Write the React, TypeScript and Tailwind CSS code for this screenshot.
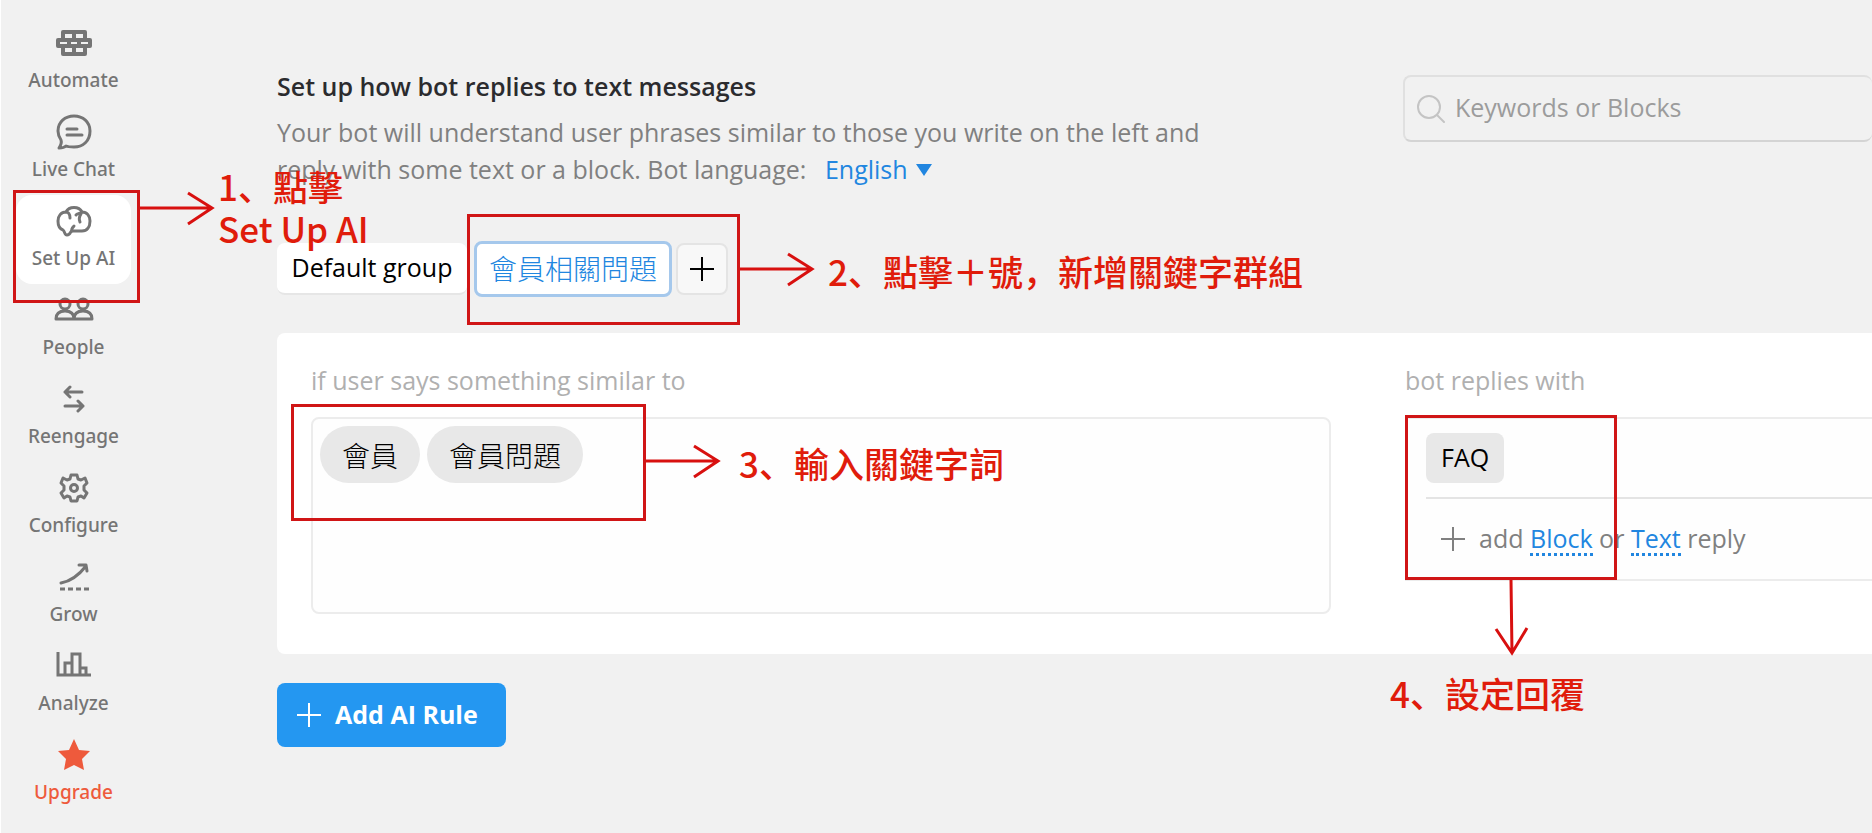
import * as React from "react";

const stroke = {
  fill: "none",
  stroke: "currentColor",
  strokeWidth: 3,
  strokeLinecap: "round",
  strokeLinejoin: "round",
} as const;

function AutomateIcon() {
  return (
    <svg width="36" height="26" viewBox="0 0 36 26" {...stroke} strokeWidth={4}>
      <path d="M7 2h22v8H7zM2 10h32v6H2zM7 16h22v8H7zM18 2v8M13 10v6M23 10v6M18 16v8" />
    </svg>
  );
}

function LiveChatIcon() {
  return (
    <svg width="36" height="36" viewBox="0 0 36 36" {...stroke}>
      <path d="M5 26C3 23 2 21 2 17C2 8 9 2 18 2C27 2 34 8 34 17C34 27 27 33 18 33C15 33 12 33 10 32C8 34 5 34 3 34C5 31 6 29 5 26Z" />
      <path d="M11 15h10M11 21h15" />
    </svg>
  );
}

function BrainIcon() {
  return (
    <svg width="36" height="31" viewBox="0 0 36 31" {...stroke}>
      <path d="M10 6C13 0 23 0 26 6C31 6 34 10 34 15C34 21 31 25 26 25H16C14 25 15 29 11 29C8 29 9 25 7 24C4 23 2 20 2 15C2 10 5 6 10 6" />
      <path d="M10 6C12 6 14 8 14 12M26 6C25 8 21 7 20 9M25 8C23 11 23 14 24 16M16 25C15 23 17 21 18 20" />
    </svg>
  );
}

function PeopleIcon() {
  return (
    <svg width="40" height="26" viewBox="0 0 40 26" {...stroke}>
      <circle cx="11" cy="7" r="5" />
      <circle cx="29" cy="7" r="5" />
      <path d="M2 22C2 16 6 14 11 14C16 14 20 16 20 22C20 16 24 14 29 14C34 14 38 16 38 22Z" />
    </svg>
  );
}

function ReengageIcon() {
  return (
    <svg width="22" height="28" viewBox="0 0 22 28" {...stroke}>
      <path d="M19 7H2M7 2L2 7L7 12M2 21H20M15 16L20 21L15 26" />
    </svg>
  );
}

function ConfigureIcon() {
  return (
    <svg width="30" height="30" viewBox="0 0 30 30" {...stroke}>
      <path d="M12 2H18L19 6L22 7L26 5L28 10L25 13V17L28 20L25 25L22 23L19 24L18 28H12L11 24L8 23L5 25L2 20L5 17V13L2 10L4 5L8 7L11 6Z" />
      <circle cx="15" cy="15" r="3.5" />
    </svg>
  );
}

function GrowIcon() {
  return (
    <svg width="30" height="30" viewBox="0 0 30 30" {...stroke}>
      <path d="M2 21C13 19 20 13 27 4M20 3L27 3L28 9" />
      <path d="M1 27H30" strokeDasharray="5 3" strokeLinecap="butt" />
    </svg>
  );
}

function AnalyzeIcon() {
  return (
    <svg width="36" height="28" viewBox="0 0 36 28" {...stroke} strokeLinecap="butt" strokeLinejoin="miter">
      <path d="M2 0V23H35M9 23V11H16M16 23V2H24V23M24 16H30V23" />
    </svg>
  );
}

function StarIcon() {
  return (
    <svg width="34" height="32" viewBox="0 0 34 32" fill="currentColor">
      <path d="M17 0L22 11L33 12L25 20L27 31L17 26L7 31L9 20L1 12L12 11Z" />
    </svg>
  );
}

function PlusIcon({ className = "" }: { className?: string }) {
  return (
    <svg width="24" height="24" viewBox="0 0 24 24" className={className} fill="none" stroke="currentColor" strokeWidth="2">
      <path d="M12 0v24M0 12h24" />
    </svg>
  );
}

const navItems = [
  { label: "Automate", icon: <AutomateIcon /> },
  { label: "Live Chat", icon: <LiveChatIcon /> },
  { label: "Set Up AI", icon: <BrainIcon />, active: true },
  { label: "People", icon: <PeopleIcon /> },
  { label: "Reengage", icon: <ReengageIcon /> },
  { label: "Configure", icon: <ConfigureIcon /> },
  { label: "Grow", icon: <GrowIcon /> },
  { label: "Analyze", icon: <AnalyzeIcon /> },
  { label: "Upgrade", icon: <StarIcon />, highlight: true },
];

// Red arrow that leaves the right side of a step box
function ArrowRight({ className }: { className: string }) {
  return (
    <svg width="76" height="36" viewBox="0 0 76 36" className={className} fill="none" stroke="#d8100f" strokeWidth="3">
      <path d="M0 18H72M48 3L72 18L48 34" />
    </svg>
  );
}

const stepBox = "pointer-events-none absolute z-10 border-3 border-[#d01516]";
const stepText =
  "pointer-events-none absolute z-10 whitespace-nowrap text-[35px] leading-[42px] font-medium text-[#e01c0b] font-['Noto_Sans_CJK_SC',sans-serif]";

function Sidebar() {
  return (
    <nav className="w-[147px] shrink-0 border-l border-white pt-[17px]">
      <ul>
        {navItems.map((item) => (
          <li key={item.label} className="relative pr-[16px] pl-[15px]">
            <a
              href="#"
              className={`flex h-[89px] flex-col items-center rounded-2xl pt-1 font-['Noto_Sans',sans-serif] text-[19px] leading-[30px] font-medium ${
                item.active ? "bg-white" : ""
              } ${item.highlight ? "text-[#ee5a3c]" : "text-[#757575]"}`}
            >
              <span className="flex h-11 items-center">{item.icon}</span>
              {item.label}
            </a>
            {item.active && (
              <div className={`${stepBox} -top-[5px] left-[12px] h-[113px] w-[127px]`}>
                <ArrowRight className="absolute left-[124px] -top-[3px]" />
                <p className={`${stepText} left-[202px] -top-[28px]`}>
                  1、點擊
                  <br />
                  Set Up AI
                </p>
              </div>
            )}
          </li>
        ))}
      </ul>
    </nav>
  );
}

function PageHeader() {
  return (
    <header className="grid grid-cols-[1052fr_469fr] gap-[74px]">
      <div>
        <h1 className="text-[25px] leading-9 font-semibold text-[#2b2b2e]">
          Set up how bot replies to text messages
        </h1>
        <div className="mt-2.5 max-w-[960px] text-[25px] leading-[37px] text-[#808080]">
          Your bot will understand user phrases similar to those you write on the left and reply with some text or a
          block. <label htmlFor="language">Bot language: </label>
          <span className="ml-3 inline-flex items-center gap-2 text-[#2186e0]">
            <select id="language" className="cursor-pointer appearance-none bg-transparent">
              <option>English</option>
            </select>
            <svg width="16" height="12" viewBox="0 0 16 12" fill="currentColor">
              <path d="M0 0H16L8 12Z" />
            </svg>
          </span>
        </div>
      </div>
      <label className="mt-[7px] flex h-[67px] items-center gap-2.5 rounded-lg border-2 border-r-0 border-[#e0e0e0] border-b-[#d4d4d4] pl-3">
        <svg width="28" height="28" viewBox="0 0 28 28" className="shrink-0 text-[#c4c4c4]" {...stroke} strokeWidth={2}>
          <circle cx="12" cy="12" r="11" />
          <path d="M20 20l7 7" />
        </svg>
        <input
          type="search"
          aria-label="Search"
          placeholder="Keywords or Blocks"
          className="w-full min-w-0 bg-transparent pb-1 text-[25px] leading-9 outline-none placeholder:text-[#9c9c9c]"
        />
      </label>
    </header>
  );
}

function GroupTabs() {
  return (
    <div className="mt-[53px] flex">
      <div className="flex items-center">
        <button className="h-[52px] w-[190px] rounded-lg border-b-2 border-[#e6e6e6] bg-white text-[25px] text-black">
          Default group
        </button>
      </div>
      <div className="relative ml-[7px] flex items-center gap-1">
        <button className="h-14 rounded-lg border-3 border-[#a5c8ec] bg-white px-3 text-[28px] font-light text-[#2186e0]">
          會員相關問題
        </button>
        <button
          aria-label="Add group"
          className="flex h-[52px] w-[52px] items-center justify-center rounded-lg border-2 border-[#e4e4e4] bg-[#f8f8f8] text-black"
        >
          <PlusIcon />
        </button>
        <div className={`${stepBox} -top-[27px] -left-[7px] h-[111px] w-[273px]`}>
          <ArrowRight className="absolute left-[270px] top-[34px]" />
          <p className={`${stepText} left-[358px] top-[33px]`}>2、點擊＋號，新增關鍵字群組</p>
        </div>
      </div>
    </div>
  );
}

function RuleCard() {
  const phrases = ["會員", "會員問題"];
  return (
    <section className="mt-9 grid grid-cols-[1020fr_467fr] gap-[74px] rounded-l-lg bg-white pt-[29px] pb-10 pl-[34px]">
      <div>
        <label htmlFor="phrase" className="block text-[25px] leading-9 text-[#b0b0b0]">
          if user says something similar to
        </label>
        <div className="relative mt-[19px] flex h-[197px] items-start gap-[7px] rounded-lg border-2 border-[#ececec] bg-[#fefefe] p-[7px]">
          {phrases.map((phrase) => (
            <span
              key={phrase}
              className="flex h-[57px] items-center rounded-full bg-[#e8e8e8] px-[22px] pt-0.5 text-[28px] font-light text-black"
            >
              {phrase}
            </span>
          ))}
          <input id="phrase" className="h-[57px] min-w-0 flex-1 bg-transparent text-[25px] outline-none" />
          <div className={`${stepBox} -top-[15px] -left-[22px] h-[117px] w-[355px]`}>
            <ArrowRight className="absolute left-[352px] top-[36px]" />
            <p className={`${stepText} left-[445px] top-[35px]`}>3、輸入關鍵字詞</p>
          </div>
        </div>
      </div>
      <div>
        <h2 className="text-[25px] leading-9 text-[#b0b0b0]">bot replies with</h2>
        <div className="relative mt-[19px] h-[164px] border-y-2 border-l-2 border-[#ececec] bg-[#fefefe] pt-3.5 pl-[19px] text-[25px]">
          <button className="h-[50px] rounded-lg bg-[#e8e8e8] px-[15px] text-black">FAQ</button>
          <div className="mt-3.5 flex h-[81px] items-center border-t-2 border-[#e4e4e4] pl-[15px] text-[#808080]">
            <PlusIcon className="mr-3.5" />
            <p className="pt-0.5 leading-[30px] whitespace-nowrap">
              add{" "}
              <a href="#" className="inline-block border-b-3 border-dotted border-[#2186e0] leading-[30px] text-[#2186e0]">
                Block
              </a>{" "}
              or{" "}
              <a href="#" className="inline-block border-b-3 border-dotted border-[#2186e0] leading-[30px] text-[#2186e0]">
                Text
              </a>{" "}
              reply
            </p>
          </div>
          <div className={`${stepBox} -top-[4px] -left-[2px] h-[165px] w-[212px]`}>
            <svg width="36" height="78" viewBox="0 0 36 78" className="absolute top-[162px] left-[86px]" fill="none" stroke="#d8100f" strokeWidth="3">
              <path d="M17 0L18 73M2 49L18 73L33 48" />
            </svg>
            <p className={`${stepText} top-[254px] -left-[18px]`}>4、設定回覆</p>
          </div>
        </div>
      </div>
    </section>
  );
}

export default function App() {
  return (
    <div className="flex min-h-screen overflow-x-hidden bg-[#f1f1f1] font-['Open_Sans','Noto_Sans_CJK_TC',sans-serif]">
      <Sidebar />
      <main className="min-w-0 flex-1 pt-[68px] pl-[130px]">
        <PageHeader />
        <GroupTabs />
        <RuleCard />
        <button className="mt-[29px] flex h-16 items-center gap-3.5 rounded-lg bg-[#2497f1] pr-7 pl-5 text-[25px] font-bold text-white">
          <PlusIcon />
          Add AI Rule
        </button>
      </main>
    </div>
  );
}
